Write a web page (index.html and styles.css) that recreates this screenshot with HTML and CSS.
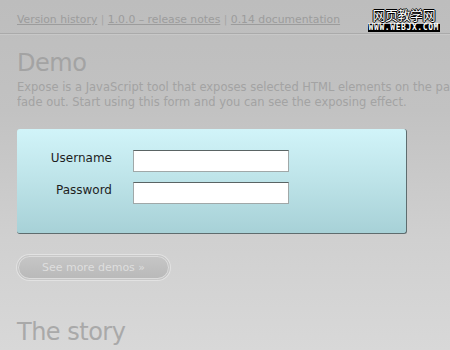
FILE: index.html
```html
<!DOCTYPE html>
<html lang="en">
<head>
  <meta charset="UTF-8">
  <title>Expose demo</title>
  <link rel="stylesheet" href="styles.css">
</head>
<body>
  <div class="topbar">
    <div class="nav">
      <a href="#">Version history</a> | <a href="#">1.0.0 – release notes</a> | <a href="#">0.14 documentation</a>
    </div>
    <div class="watermark">
      <span class="wm-cn">网页教学网</span>
      <span class="wm-url">WWW.WEBJX.COM</span>
    </div>
  </div>
  <div class="content">
    <h1>Demo</h1>
    <p class="intro">Expose is a JavaScript tool that exposes selected HTML elements on the page and other elements<br>fade out. Start using this form and you can see the exposing effect.</p>
    <form class="demo-form">
      <div class="row">
        <label for="username">Username</label>
        <input type="text" id="username">
      </div>
      <div class="row">
        <label for="password">Password</label>
        <input type="password" id="password">
      </div>
    </form>
    <button class="more-button">See more demos »</button>
    <h1 class="story">The story</h1>
  </div>
</body>
</html>
```
FILE: styles.css
```css
body {
  margin: 0;
  width: 450px;
  height: 350px;
  overflow: hidden;
  font-family: "DejaVu Sans", sans-serif;
  background: linear-gradient(to bottom, #bdbdbd 0px, #c2c2c2 110px, #d0d0d0 240px, #d8d8d8 350px);
}
.topbar {
  display: flex;
  justify-content: space-between;
  align-items: flex-start;
  height: 33px;
  border-bottom: 1px solid #aaaaaa;
  box-shadow: 0 1px 0 #c8c8c8;
}
.nav {
  padding: 13px 0 0 17px;
  font-size: 10.8px;
  color: #a6a6a6;
  white-space: nowrap;
}
.nav a {
  color: #9c9c9c;
  text-decoration: underline;
}
.watermark {
  display: flex;
  flex-direction: column;
  align-items: center;
  gap: 1px;
  margin: 7px 10px 0 0;
}
.wm-cn {
  font-family: "Noto Sans CJK SC", sans-serif;
  font-size: 13px;
  line-height: 16px;
  letter-spacing: -0.5px;
  color: #fff;
  text-shadow: 1px 0 0 #000, -1px 0 0 #000, 0 1px 0 #000, 0 -1px 0 #000;
}
.wm-url {
  background: #000;
  color: #fff;
  font-family: "DejaVu Sans Mono", monospace;
  font-weight: bold;
  font-size: 8px;
  line-height: 8px;
  padding: 0 1px;
  letter-spacing: 0.6px;
}
.content {
  padding: 0 17px;
}
h1 {
  margin: 14px 0 0 0;
  font-size: 24px;
  font-weight: normal;
  color: #a3a3a3;
  line-height: 30px;
  letter-spacing: -0.5px;
}
.intro {
  margin: 2px -17px 0 0;
  font-size: 11.5px;
  line-height: 15px;
  color: #a3a3a3;
  white-space: nowrap;
  overflow: hidden;
}
.demo-form {
  margin: 19px 0 0 0;
  width: 390px;
  height: 105px;
  box-sizing: border-box;
  padding: 21px 0 0 0;
  background: linear-gradient(to bottom, #d1f4f9, #bde3e8 50%, #a7d1d7);
  border-radius: 3px;
  border-right: 1px solid #5e6c6e;
  border-bottom: 1px solid #5e6c6e;
  display: flex;
  flex-direction: column;
  gap: 10px;
}
.row {
  display: flex;
  align-items: flex-start;
}
.row label {
  width: 95px;
  padding-top: 1px;
  text-align: right;
  font-size: 12px;
  color: #1e1e1e;
}
.row input {
  margin-left: 21px;
  width: 156px;
  height: 22px;
  box-sizing: border-box;
  border: 1px solid #a0a8a8;
  border-top-color: #5a6464;
  background: #fff;
}
.more-button {
  margin-top: 21px;
  width: 153px;
  height: 25px;
  border-radius: 13px;
  border: 1px solid #c8c8c8;
  box-shadow: 0 0 0 1px #e2e2e2, inset 0 0 0 1px #dcdcdc;
  background: linear-gradient(to bottom, #c6c6c6, #b9b9b9);
  color: #dedede;
  font-family: "DejaVu Sans", sans-serif;
  font-size: 11px;
  display: block;
}
.story {
  margin-top: 37px;
  color: #a9a9a9;
}
```
